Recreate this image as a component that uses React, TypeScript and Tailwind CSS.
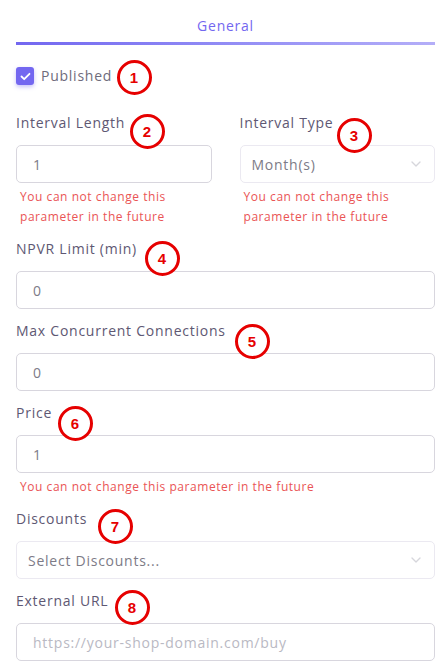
import { ChevronDown } from "lucide-react"

const font = { fontFamily: '"Open Sans", "Liberation Sans", sans-serif' }

function Marker({ n, x, y }: { n: number; x: number; y: number }) {
  return (
    <div
      className="absolute w-[35px] h-[35px] rounded-full border-[3.5px] border-[#e60000] bg-white flex items-center justify-center text-[#e60000] font-bold text-[15px] leading-none"
      style={{ left: x - 17.5, top: y - 17.5, fontFamily: '"Liberation Sans", Arial, sans-serif' }}
    >
      {n}
    </div>
  )
}

function Label({ children }: { children: React.ReactNode }) {
  return <div className="text-[14px] leading-[20px] tracking-[0.75px] text-[#5e5873]">{children}</div>
}

function Input({ value, placeholder }: { value?: string; placeholder?: string }) {
  return (
    <div className="mt-3 h-[38px] rounded-[5px] border border-[#d8d6de] bg-white flex items-center px-4 text-[14px] tracking-[0.75px]">
      {value ? <span className="text-[#7d7b87]">{value}</span> : <span className="text-[#b9b9c3]">{placeholder}</span>}
    </div>
  )
}

function Select({ value }: { value: string }) {
  return (
    <div className="mt-3 h-[38px] rounded-[5px] border border-[#ebe9f1] bg-white flex items-center justify-between pl-[11px] pr-[10px] text-[14px] tracking-[0.75px]">
      <span className="text-[#7d7b87]">{value}</span>
      <ChevronDown size={16} strokeWidth={2} className="text-[#d6d6dc]" />
    </div>
  )
}

function Error({ children }: { children: React.ReactNode }) {
  return <div className="mt-1 pl-1 text-[12px] leading-[20px] tracking-[0.55px] text-[#ea5455]">{children}</div>
}

export default function App() {
  return (
    <div className="relative w-[446px] h-[669px] bg-white pl-4 pr-[11px] overflow-hidden" style={font}>
      <div className="pt-4 pb-[6px] text-center text-[14px] leading-[20px] tracking-[0.75px] text-[#7367f0]">General</div>
      <div className="h-[3px] bg-gradient-to-r from-[#7367f0] to-[#b4aef8]" />

      <div className="mt-[21px] flex items-center gap-[7px]">
        <div className="w-[18px] h-[18px] rounded-[3px] bg-[#7367f0] shadow-[0_2px_4px_rgba(115,103,240,0.4)] flex items-center justify-center">
          <svg width="11" height="9" viewBox="0 0 11 9" fill="none">
            <path d="M1.5 4.5 L4.2 7.2 L9.5 1.8" stroke="white" strokeWidth="1.8" strokeLinecap="round" strokeLinejoin="round" />
          </svg>
        </div>
        <span className="text-[14px] leading-[20px] tracking-[0.75px] text-[#6e6b7b]">Published</span>
      </div>

      <div className="mt-[27px] flex gap-7">
        <div className="flex-1">
          <Label>Interval Length</Label>
          <Input value="1" />
          <Error>
            You can not change this
            <br />
            parameter in the future
          </Error>
        </div>
        <div className="flex-1">
          <Label>Interval Type</Label>
          <Select value="Month(s)" />
          <Error>
            You can not change this
            <br />
            parameter in the future
          </Error>
        </div>
      </div>

      <div className="mt-3">
        <Label>NPVR Limit (min)</Label>
        <Input value="0" />
      </div>
      <div className="mt-3">
        <Label>Max Concurrent Connections</Label>
        <Input value="0" />
      </div>
      <div className="mt-3">
        <Label>Price</Label>
        <Input value="1" />
        <Error>You can not change this parameter in the future</Error>
      </div>
      <div className="mt-3">
        <Label>Discounts</Label>
        <Select value="Select Discounts..." />
      </div>
      <div className="mt-3">
        <Label>External URL</Label>
        <Input placeholder="https://your-shop-domain.com/buy" />
      </div>

      <Marker n={1} x={134} y={77} />
      <Marker n={2} x={147} y={131} />
      <Marker n={3} x={354} y={135} />
      <Marker n={4} x={162} y={258} />
      <Marker n={5} x={252} y={341} />
      <Marker n={6} x={75} y={423} />
      <Marker n={7} x={115} y={526} />
      <Marker n={8} x={132} y={607} />
    </div>
  )
}
